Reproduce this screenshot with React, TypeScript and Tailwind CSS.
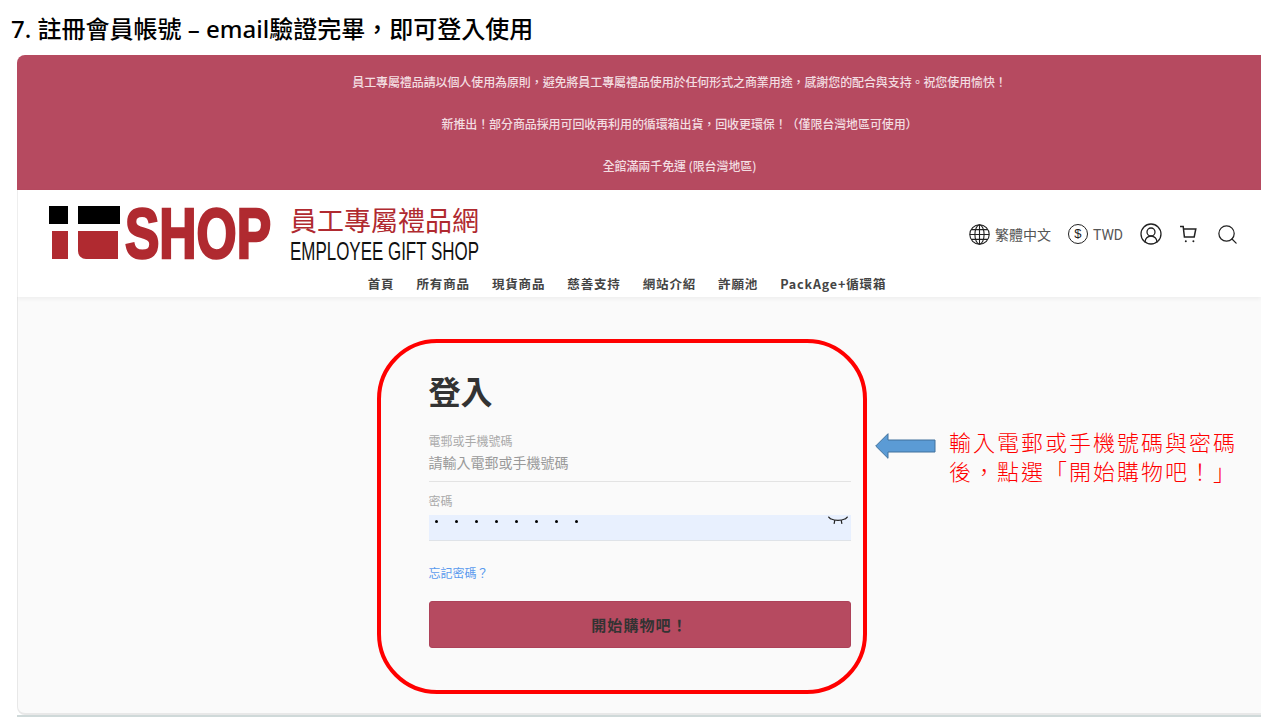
import { CircleUserRound, Search } from 'lucide-react';

const cjk = { fontFamily: '"Noto Sans CJK TC", sans-serif' };
const navItems = ['首頁', '所有商品', '現貨商品', '慈善支持', '網站介紹', '許願池', 'PackAge+循環箱'];
const notices = [
  '員工專屬禮品請以個人使用為原則，避免將員工專屬禮品使用於任何形式之商業用途，感謝您的配合與支持。祝您使用愉快！',
  '新推出！部分商品採用可回收再利用的循環箱出貨，回收更環保！（僅限台灣地區可使用）',
  '全館滿兩千免運 (限台灣地區)',
];

function Logo() {
  return (
    <svg width="440" height="60" viewBox="0 0 440 60" className="shrink-0">
      <rect x="1" y="2" width="19" height="18" fill="#000" />
      <rect x="30" y="2" width="42" height="18" fill="#000" />
      <rect x="4" y="27" width="16" height="28" fill="#b02a30" />
      <path d="M30 27h40v28H38a8 8 0 0 1-8-8z" fill="#b02a30" />
      <text
        x="77"
        y="54"
        textLength="146"
        lengthAdjust="spacingAndGlyphs"
        fontFamily="Liberation Sans"
        fontWeight="700"
        fontSize="70"
        fill="#b02a30"
        stroke="#b02a30"
        strokeWidth="2.6"
      >
        SHOP
      </text>
      <text x="242" y="27" textLength="189" lengthAdjust="spacingAndGlyphs" fontFamily="Noto Sans CJK TC" fontSize="27" fill="#b02a30">
        員工專屬禮品網
      </text>
      <text x="242" y="56" textLength="189" lengthAdjust="spacingAndGlyphs" fontFamily="Liberation Sans" fontSize="25" fill="#111">
        EMPLOYEE GIFT SHOP
      </text>
    </svg>
  );
}

function GlobeIcon() {
  return (
    <svg width="21" height="21" viewBox="0 0 21 21" fill="none" stroke="#222" strokeWidth="1.1">
      <circle cx="10.5" cy="10.5" r="9.7" />
      <ellipse cx="10.5" cy="10.5" rx="4.6" ry="9.7" />
      <path d="M10.5.8v19.4M.8 10.5h19.4M2.2 5.6h16.6M2.2 15.4h16.6" />
    </svg>
  );
}

function CartIcon() {
  return (
    <svg width="20" height="20" viewBox="0 0 20 20" fill="none" stroke="#222" strokeWidth="1.5">
      <path d="M1 2.5h3.2l1.2 10.5h9.8l1.6-8H4.6" />
      <circle cx="6.8" cy="17.2" r="1" fill="#222" stroke="none" />
      <circle cx="14.4" cy="17.2" r="1" fill="#222" stroke="none" />
    </svg>
  );
}

function ClosedEye() {
  return (
    <svg width="20" height="10" viewBox="0 0 20 10" fill="none" stroke="#222" strokeWidth="1.2" className="mt-[1px]">
      <path d="M2.5 2.8C7 4.8 13 4.8 17.5 2.8" />
      <path d="M.3 .8l2.4 2.2M19.7 .8l-2.4 2.2M6.8 4.2l-.7 3.6M13.2 4.2l.7 3.6" />
    </svg>
  );
}

function LoginForm() {
  return (
    <div className="flex w-[422px] flex-col">
      <h2 className="text-[32px] leading-[46px] font-bold text-[#333]">登入</h2>
      <label className="mt-[19px] text-[12px] leading-[18px] text-[#aaa]">電郵或手機號碼</label>
      <div className="flex h-[32px] items-center border-b border-[#e3e3e3] pb-[6px] text-[14px] text-[#999]">請輸入電郵或手機號碼</div>
      <label className="mt-[10px] text-[12px] leading-[18px] text-[#aaa]">密碼</label>
      <div className="mt-[5px] flex h-[26px] items-start justify-between border-b border-[#dfe3e8] bg-[#e8f0fe] pr-[3px]">
        <div className="flex gap-[17px] pt-[5px] pl-[6px]">
          {Array.from({ length: 8 }).map((_, i) => (
            <span key={i} className="h-[3px] w-[3px] rounded-full bg-black" />
          ))}
        </div>
        <ClosedEye />
      </div>
      <a className="mt-[23px] text-[12px] leading-[18px] text-[#5b9bee]">忘記密碼？</a>
      <button className="mt-[19px] h-[47px] rounded-[3px] border border-[#ad4259] bg-[#b64a60] pt-[1px] text-[15px] font-bold tracking-[1.1px] text-[#333]">
        開始購物吧！
      </button>
    </div>
  );
}

export default function App() {
  return (
    <div className="relative h-[720px] w-[1280px] overflow-hidden bg-white" style={cjk}>
      <h1
        className="pt-[13px] pl-[11px] text-[24px] leading-[32px] font-medium text-black"
        style={{ fontFamily: '"Noto Sans", "Noto Sans CJK TC", sans-serif' }}
      >
        7. 註冊會員帳號 – email驗證完畢，即可登入使用
      </h1>

      <div className="mt-[10px] ml-[17px] flex h-[662px] w-[1244px] flex-col overflow-hidden rounded-tl-[8px] border-b-2 border-[#cfd9d9] bg-white">
        <div className="flex h-[135px] flex-col items-center justify-center gap-[24px] bg-[#b64a60] pt-[2px] pl-[81px] text-[12px] leading-[18px] font-medium tracking-[-0.1px] text-[#f3dde1]">
          {notices.map((n) => (
            <p key={n}>{n}</p>
          ))}
        </div>

        <header className="z-10 h-[107px] border-l border-[#eeeeee] bg-white shadow-[0_2px_4px_rgba(0,0,0,0.05)]">
          <div className="flex h-[84px] items-start justify-between pt-[14px] pr-[22px] pl-[30px]">
            <Logo />
            <div className="mt-[18px] flex items-center text-[14px] text-[#555]">
              <GlobeIcon />
              <span className="ml-[5px]">繁體中文</span>
              <span className="ml-[17px] flex h-[20px] w-[20px] items-center justify-center rounded-full border-[1.2px] border-[#222] text-[13px] text-[#222]" style={{ fontFamily: '"Liberation Sans", sans-serif' }}>
                $
              </span>
              <span className="ml-[5px] pt-[2px]" style={{ fontFamily: 'Roboto, sans-serif' }}>TWD</span>
              <CircleUserRound size={24} strokeWidth={1.3} className="ml-[16px] text-[#222]" />
              <span className="ml-[16px]"><CartIcon /></span>
              <Search size={23} strokeWidth={1.3} className="ml-[17px] text-[#222]" />
            </div>
          </div>
          <nav className="flex justify-center gap-[22px] pr-[25px] text-[12.5px] leading-[20px] font-bold tracking-[0.85px] text-[#444]">
            {navItems.map((item) => (
              <span key={item}>{item}</span>
            ))}
          </nav>
        </header>

        <main className="flex flex-1 justify-center rounded-bl-[8px] border-b-2 border-l border-[#e8e8e8] bg-[#fafafa] pt-[70px]">
          <LoginForm />
        </main>
      </div>

      {/* callouts pasted over the screenshot */}
      <div className="absolute top-[339px] left-[377px] h-[355px] w-[490px] rounded-[60px] border-[4px] border-[#ff0000]" />
      <svg className="absolute top-[433px] left-[875px]" width="61" height="26" viewBox="0 0 61 26">
        <path d="M.7 13L13 .7v6.3h47v12H13v6.3z" fill="#5b9bd5" stroke="#41719c" strokeWidth="1" />
      </svg>
      <div className="absolute top-[427px] left-[949px] w-[300px] text-[22px] leading-[29px] font-light tracking-[2px] text-[#ff0000]">
        輸入電郵或手機號碼與密碼
        <br />
        後，點選「開始購物吧！」
      </div>
    </div>
  );
}
